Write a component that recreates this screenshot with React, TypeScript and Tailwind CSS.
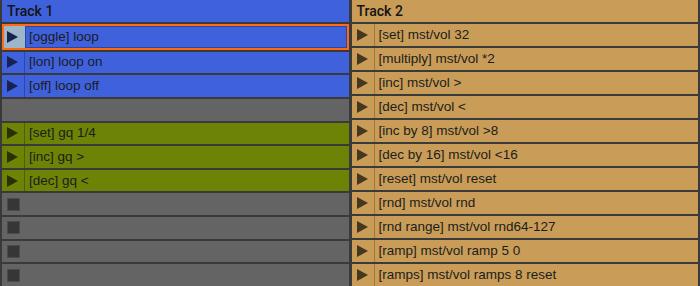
import React from "react";

type Row =
  | { kind: "clip"; text: string; color: "blue" | "olive" | "tan"; selected?: boolean }
  | { kind: "empty" }
  | { kind: "stop" };

const track1: Row[] = [
  { kind: "clip", text: "[oggle] loop", color: "blue", selected: true },
  { kind: "clip", text: "[lon] loop on", color: "blue" },
  { kind: "clip", text: "[off] loop off", color: "blue" },
  { kind: "empty" },
  { kind: "clip", text: "[set] gq 1/4", color: "olive" },
  { kind: "clip", text: "[inc] gq >", color: "olive" },
  { kind: "clip", text: "[dec] gq <", color: "olive" },
  { kind: "stop" },
  { kind: "stop" },
  { kind: "stop" },
  { kind: "stop" },
];

const track2Texts = [
  "[set] mst/vol 32",
  "[multiply] mst/vol *2",
  "[inc] mst/vol >",
  "[dec] mst/vol <",
  "[inc by 8] mst/vol >8",
  "[dec by 16] mst/vol <16",
  "[reset] mst/vol reset",
  "[rnd] mst/vol rnd",
  "[rnd range] mst/vol rnd64-127",
  "[ramp] mst/vol ramp 5 0",
  "[ramps] mst/vol ramps 8 reset",
];
const track2: Row[] = track2Texts.map((t) => ({ kind: "clip", text: t, color: "tan" }));

const styles = {
  blue: { bg: "bg-[#3f62dc]", line: "border-[#2d47a8]", tri: "#18224e" },
  olive: { bg: "bg-[#6d8306]", line: "border-[#4f5f05]", tri: "#283004" },
  tan: { bg: "bg-[#c99c58]", line: "border-[#9c7840]", tri: "#45361e" },
};

function Play({ color }: { color: string }) {
  return (
    <svg width="11" height="12" viewBox="0 0 11 12">
      <path d="M0 0 L11 6 L0 12 Z" fill={color} />
    </svg>
  );
}

function Cell({ row }: { row: Row }) {
  if (row.kind === "empty") {
    return <div className="flex-1 bg-[#646464]" />;
  }
  if (row.kind === "stop") {
    return (
      <div className="flex-1 bg-[#646464] flex items-center pl-[5px]">
        <div className="w-[13px] h-[13px] bg-[#363636] border border-[#4c4c4c]" />
      </div>
    );
  }
  const s = styles[row.color];
  if (row.selected) {
    return (
      <div className={`flex-1 ${s.bg} border-2 border-[#ff6a13] flex min-h-0`}>
        <div className="w-[21px] bg-[#9db6c9] flex items-center pl-[3px]">
          <Play color={s.tri} />
        </div>
        <div className="flex-1 flex items-center pl-[3px] border border-[#2d47a8] text-[13.5px] text-[#1b1b24]">
          {row.text}
        </div>
      </div>
    );
  }
  return (
    <div className={`flex-1 ${s.bg} flex min-h-0`}>
      <div className={`w-[23px] flex items-center pl-[5px] border-r ${s.line}`}>
        <Play color={s.tri} />
      </div>
      <div className="flex-1 flex items-center pl-[4px] text-[13.5px] text-[#1c1c1c]">
        {row.text}
      </div>
    </div>
  );
}

function Column({ title, rows, headerBg }: { title: string; rows: Row[]; headerBg: string }) {
  return (
    <div className="flex-1 flex flex-col gap-[2px] min-w-0">
      <div
        className={`h-[22px] ${headerBg} flex items-center pl-[5px] text-[14px] font-medium text-[#141414]`}
        style={{ fontFamily: "Roboto, sans-serif" }}
      >
        {title}
      </div>
      {rows.map((r, i) => (
        <Cell key={i} row={r} />
      ))}
    </div>
  );
}

export default function App() {
  return (
    <div
      className="w-[700px] h-[286px] bg-[#3a3a3a] flex gap-[3px] pl-[2px] pr-[2px] overflow-hidden"
      style={{ fontFamily: '"Liberation Sans", Arial, sans-serif' }}
    >
      <Column title="Track 1" rows={track1} headerBg="bg-[#3f62dc]" />
      <Column title="Track 2" rows={track2} headerBg="bg-[#c99c58]" />
    </div>
  );
}
